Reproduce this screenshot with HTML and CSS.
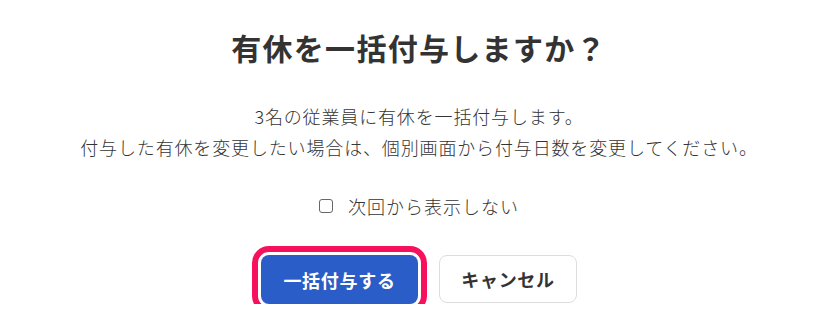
FILE: index.html
```html
<!DOCTYPE html>
<html lang="ja">
<head>
<meta charset="utf-8">
<title>有休一括付与</title>
<link rel="stylesheet" href="styles.css">
</head>
<body>
<div class="dialog">
  <h1 class="title">有休を一括付与しますか？</h1>
  <p class="message">3名の従業員に有休を一括付与します。<br>付与した有休を変更したい場合は、個別画面から付与日数を変更してください。</p>
  <label class="check">
    <span class="box"></span>
    <span class="check-label">次回から表示しない</span>
  </label>
  <div class="actions">
    <button class="btn btn-primary">一括付与する</button>
    <button class="btn btn-secondary">キャンセル</button>
  </div>
</div>
</body>
</html>
```
FILE: styles.css
```css
html, body {
  margin: 0;
  padding: 0;
  background: #ffffff;
}
body {
  font-family: "Noto Sans CJK JP", "Noto Sans", sans-serif;
  color: #333333;
}
.dialog {
  display: flex;
  flex-direction: column;
  align-items: center;
  padding-top: 26px;
}
.title {
  margin: 0;
  font-size: 30px;
  line-height: 42px;
  font-weight: 700;
  letter-spacing: 1.3px;
  color: #333333;
}
.message {
  margin: 33px 0 0;
  font-size: 18px;
  line-height: 31px;
  letter-spacing: 0.85px;
  text-align: center;
  font-weight: 300;
  color: #333333;
}
.check {
  margin-top: 28px;
  display: flex;
  align-items: center;
  gap: 15px;
  height: 30px;
}
.box {
  width: 12px;
  height: 12px;
  border: 1.5px solid #666666;
  border-radius: 3px;
  background: #fff;
}
.check-label {
  font-size: 18px;
  letter-spacing: 1px;
  font-weight: 300;
}
.actions {
  margin-top: 34px;
  display: flex;
  gap: 21px;
}
.btn {
  font-family: "Noto Sans CJK JP", "Noto Sans", sans-serif;
  font-size: 18px;
  font-weight: 700;
  letter-spacing: 0.7px;
  height: 49px;
  border-radius: 8px;
  padding: 0;
  cursor: pointer;
}
.btn-primary {
  width: 157px;
  background: #2b5dc8;
  color: #ffffff;
  border: none;
  outline: 6px solid #f5115b;
  outline-offset: 3px;
}
.btn-secondary {
  width: 138px;
  height: 48px;
  background: #ffffff;
  color: #333333;
  border: 1px solid #dddddd;
}
```
